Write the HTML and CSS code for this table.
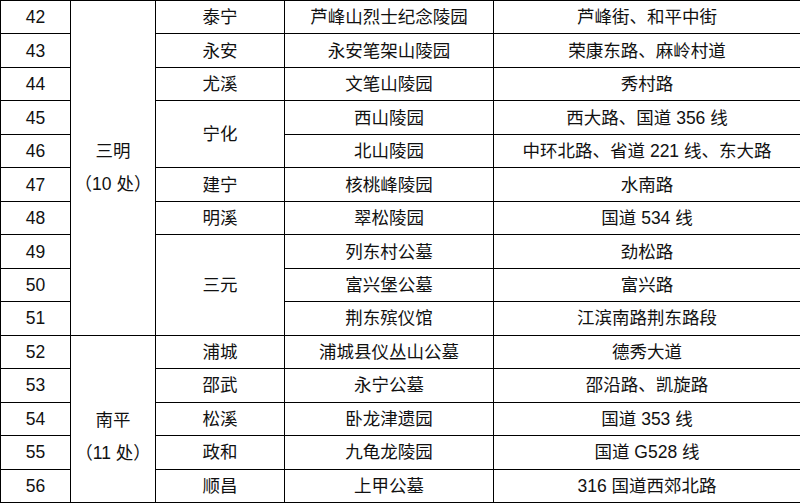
FILE: index.html
```html
<!DOCTYPE html>
<html lang="zh">
<head>
<meta charset="utf-8">
<link rel="stylesheet" href="styles.css">
</head>
<body>
<table class="grid">
  <colgroup>
    <col class="c-no">
    <col class="c-city">
    <col class="c-county">
    <col class="c-name">
    <col class="c-road">
  </colgroup>
  <tbody>
    <tr><td class="num">42</td><td rowspan="10" class="city"><div>三明</div><div>（10 处）</div></td><td>泰宁</td><td>芦峰山烈士纪念陵园</td><td>芦峰街、和平中街</td></tr>
    <tr><td class="num">43</td><td>永安</td><td>永安笔架山陵园</td><td>荣康东路、麻岭村道</td></tr>
    <tr><td class="num">44</td><td>尤溪</td><td>文笔山陵园</td><td>秀村路</td></tr>
    <tr><td class="num">45</td><td rowspan="2">宁化</td><td>西山陵园</td><td>西大路、国道 356 线</td></tr>
    <tr><td class="num">46</td><td>北山陵园</td><td>中环北路、省道 221 线、东大路</td></tr>
    <tr><td class="num">47</td><td>建宁</td><td>核桃峰陵园</td><td>水南路</td></tr>
    <tr><td class="num">48</td><td>明溪</td><td>翠松陵园</td><td>国道 534 线</td></tr>
    <tr><td class="num">49</td><td rowspan="3">三元</td><td>列东村公墓</td><td>劲松路</td></tr>
    <tr><td class="num">50</td><td>富兴堡公墓</td><td>富兴路</td></tr>
    <tr><td class="num">51</td><td>荆东殡仪馆</td><td>江滨南路荆东路段</td></tr>
    <tr><td class="num">52</td><td rowspan="5" class="city city-top"><div class="city-inner"><div>南平</div><div>（11 处）</div></div></td><td>浦城</td><td>浦城县仪丛山公墓</td><td>德秀大道</td></tr>
    <tr><td class="num">53</td><td>邵武</td><td>永宁公墓</td><td>邵沿路、凯旋路</td></tr>
    <tr><td class="num">54</td><td>松溪</td><td>卧龙津遗园</td><td>国道 353 线</td></tr>
    <tr><td class="num">55</td><td>政和</td><td>九龟龙陵园</td><td>国道 G528 线</td></tr>
    <tr><td class="num">56</td><td>顺昌</td><td>上甲公墓</td><td>316 国道西郊北路</td></tr>
  </tbody>
</table>
</body>
</html>
```
FILE: styles.css
```css
html, body {
  margin: 0;
  padding: 0;
  background: #fff;
}
body {
  font-family: "Liberation Sans", "Noto Sans CJK SC", sans-serif;
  font-size: 17.5px;
  color: #111;
}
.grid {
  border-collapse: collapse;
  table-layout: fixed;
  width: 800px;
}
.grid tr {
  height: 33.47px;
}
.c-no { width: 70px; }
.c-city { width: 85px; }
.c-county { width: 129px; }
.c-name { width: 209px; }
.c-road { width: 307px; }
.grid td {
  border: 1px solid #000;
  padding: 0;
  text-align: center;
  vertical-align: middle;
  line-height: 20px;
  white-space: nowrap;
}
.grid td.city {
  line-height: 33px;
}
.grid td.city-top {
  vertical-align: top;
}
.city-inner {
  padding-top: 68px;
}
```
